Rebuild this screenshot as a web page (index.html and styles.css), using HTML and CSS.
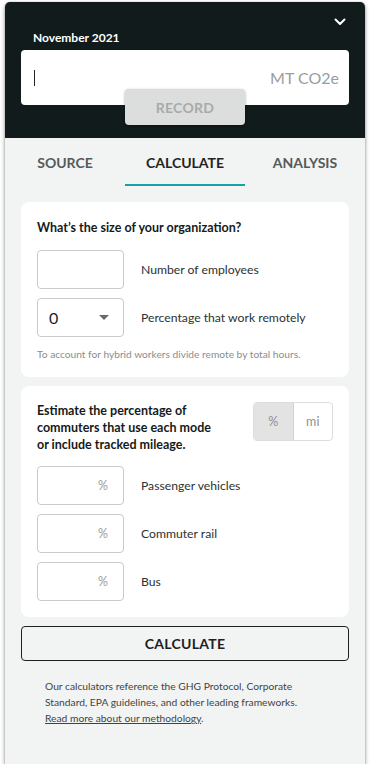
FILE: index.html
```html
<!DOCTYPE html>
<html lang="en">
<head>
    <meta charset="UTF-8">
    <meta name="viewport" content="width=device-width, initial-scale=1.0">
    <title>Emissions Calculator</title>
    <link rel="stylesheet" href="styles.css">
</head>
<body>
    <div class="widget">
        <div class="header">
            <div class="header-top">
                <svg class="chevron" viewBox="0 0 12 8" fill="none">
                    <path d="M1.5 1.5L6 6L10.5 1.5" stroke="white" stroke-width="2" stroke-linecap="round" stroke-linejoin="round"/>
                </svg>
            </div>
            <div class="period">November 2021</div>
            <div class="co2-input">
                <span class="cursor"></span>
                <span class="unit">MT CO2e</span>
            </div>
            <button class="record-btn">RECORD</button>
        </div>

        <div class="tabs">
            <div class="tab">SOURCE</div>
            <div class="tab active">CALCULATE</div>
            <div class="tab">ANALYSIS</div>
        </div>

        <div class="content">
            <div class="card">
                <div class="card-title">What’s the size of your organization?</div>
                <div class="field-list">
                    <div class="field-row">
                        <div class="box"></div>
                        <span class="field-label">Number of employees</span>
                    </div>
                    <div class="field-row">
                        <div class="box select">
                            <span class="select-value">0</span>
                            <span class="caret"></span>
                        </div>
                        <span class="field-label">Percentage that work remotely</span>
                    </div>
                </div>
                <p class="note">To account for hybrid workers divide remote by total hours.</p>
            </div>

            <div class="card">
                <div class="card-head">
                    <div class="card-title narrow">Estimate the percentage of commuters that use each mode or include tracked mileage.</div>
                    <div class="toggle">
                        <span class="toggle-opt on">%</span>
                        <span class="toggle-opt">mi</span>
                    </div>
                </div>
                <div class="field-list">
                    <div class="field-row">
                        <div class="box pct"><span>%</span></div>
                        <span class="field-label">Passenger vehicles</span>
                    </div>
                    <div class="field-row">
                        <div class="box pct"><span>%</span></div>
                        <span class="field-label">Commuter rail</span>
                    </div>
                    <div class="field-row">
                        <div class="box pct"><span>%</span></div>
                        <span class="field-label">Bus</span>
                    </div>
                </div>
            </div>

            <button class="calc-btn">CALCULATE</button>

            <p class="footnote">
                Our calculators reference the GHG Protocol, Corporate Standard, EPA guidelines, and other leading frameworks.<br>
                <a href="#">Read more about our methodology</a>.
            </p>
        </div>
    </div>
</body>
</html>
```

FILE: styles.css
```css
:root {
    --dark: #121b1b;
    --bg: #f2f3f3;
    --text: #1f2424;
    --muted: #8a8d8d;
    --border: #c9cbcb;
    --teal: #17a2a4;
}

* {
    box-sizing: border-box;
}

body {
    margin: 0;
    background: white;
    font-family: Lato, 'Open Sans', sans-serif;
    color: var(--text);
}

.widget {
    margin: 2px 5px 0;
    width: 360px;
    height: 762px;
    background: var(--bg);
    border-radius: 5px 5px 0 0;
    box-shadow: 0 2px 4px rgba(0,0,0,0.45), 0 0 1px rgba(0,0,0,0.4);
}

/* header */
.header {
    background: var(--dark);
    border-radius: 5px 5px 0 0;
    padding: 12px 16px 13px;
    display: flex;
    flex-direction: column;
}

.header-top {
    height: 16px;
    display: flex;
    justify-content: flex-end;
    align-items: center;
}

.chevron {
    width: 12px;
    height: 8px;
    margin-right: 3px;
}

.period {
    color: white;
    font-weight: 700;
    font-size: 12px;
    line-height: 16px;
    padding-left: 12px;
    margin-bottom: 4px;
}

.co2-input {
    height: 55px;
    background: white;
    border-radius: 4px;
    display: flex;
    align-items: center;
    justify-content: space-between;
    padding: 0 10px 0 13px;
}

.cursor {
    width: 1px;
    height: 16px;
    background: #222;
}

.unit {
    color: #9a9d9d;
    font-size: 16px;
}

.record-btn {
    align-self: center;
    margin-top: -16px;
    width: 120px;
    height: 36px;
    border: none;
    border-radius: 4px;
    background: #dcdddd;
    color: #a8aaaa;
    font-family: inherit;
    font-weight: 700;
    font-size: 14px;
    letter-spacing: 0.3px;
    box-shadow: 0 1px 3px rgba(0,0,0,0.35);
}

/* tabs */
.tabs {
    display: grid;
    grid-template-columns: repeat(3, 1fr);
}

.tab {
    text-align: center;
    font-size: 14px;
    font-weight: 700;
    line-height: 17px;
    padding: 16px 0 13px;
    border-bottom: 2px solid transparent;
    color: #555a5a;
}

.tab.active {
    color: var(--text);
    border-bottom-color: var(--teal);
}

/* content */
.content {
    padding: 16px 16px 0;
    display: flex;
    flex-direction: column;
    gap: 9px;
}

.card {
    background: white;
    border-radius: 8px;
    padding: 16px;
}

.card-title {
    font-size: 12.5px;
    font-weight: 700;
    line-height: 19px;
    color: #151a1a;
}

.card-title.narrow {
    width: 185px;
    line-height: 17px;
}

.card-head {
    display: flex;
    justify-content: space-between;
    align-items: flex-start;
}

.toggle {
    display: flex;
    width: 80px;
    height: 39px;
    border: 1px solid #dcdddd;
    border-radius: 4px;
    overflow: hidden;
}

.toggle-opt {
    flex: 1;
    display: flex;
    align-items: center;
    justify-content: center;
    font-size: 12.5px;
    color: #8d9090;
    padding-bottom: 1px;
}

.toggle-opt.on {
    background: #e3e3e3;
    border-right: 1px solid #d0d1d1;
}

.field-list {
    margin-top: 13px;
    display: flex;
    flex-direction: column;
    gap: 9px;
}

.field-row {
    display: flex;
    align-items: center;
    gap: 17px;
}

.box {
    width: 87px;
    height: 39px;
    border: 1px solid var(--border);
    border-radius: 4px;
    background: white;
    display: flex;
    align-items: center;
}

.box.select {
    justify-content: space-between;
    padding: 0 14px 0 11px;
}

.select-value {
    font-size: 16px;
    color: #222;
}

.caret {
    width: 0;
    height: 0;
    border-left: 5px solid transparent;
    border-right: 5px solid transparent;
    border-top: 5px solid #666a6a;
}

.box.pct {
    justify-content: flex-end;
    padding-right: 15px;
    font-size: 12.5px;
    color: #9a9d9d;
}

.field-label {
    font-size: 12.2px;
    color: #2c3131;
}

.note {
    margin: 10px 0 0;
    font-size: 10.2px;
    line-height: 14px;
    color: #8a8d8d;
}

.calc-btn {
    height: 35px;
    border: 1px solid #1c2222;
    border-radius: 4px;
    background: var(--bg);
    font-family: inherit;
    font-weight: 700;
    font-size: 14px;
    color: #1c2222;
    letter-spacing: 0.3px;
}

.footnote {
    margin: 8px 0 0;
    padding: 0 24px;
    font-size: 10.25px;
    line-height: 16px;
    color: #3e4444;
}

.footnote a {
    color: #3e4444;
}
```
